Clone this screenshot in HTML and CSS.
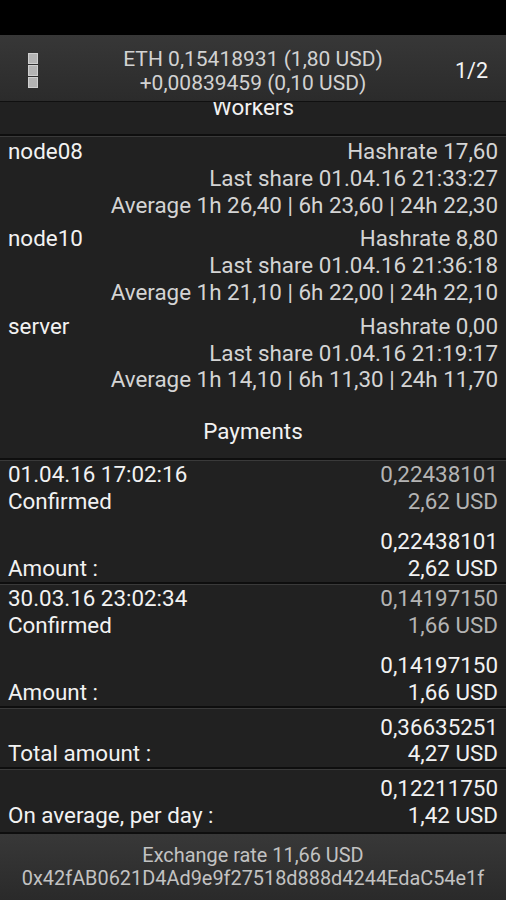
FILE: index.html
```html
<!DOCTYPE html>
<html lang="en">
<head>
<meta charset="utf-8" />
<title>Pool stats</title>
<link rel="stylesheet" href="styles.css">
</head>
<body>
<div class="screen">
  <div class="status-bar"></div>

  <div class="header">
    <div class="menu-icon">
      <span></span>
      <span></span>
      <span></span>
    </div>
    <div class="balance">
      <div>ETH 0,15418931 (1,80 USD)</div>
      <div>+0,00839459 (0,10 USD)</div>
    </div>
    <div class="page">1/2</div>
  </div>

  <div class="main">
    <div class="scroll">
      <div class="section-title">Workers</div>
      <div class="workers">
        <div class="worker">
          <div class="name">node08</div>
          <div class="stats">
            <div>Hashrate 17,60</div>
            <div>Last share 01.04.16 21:33:27</div>
            <div>Average 1h 26,40 | 6h 23,60 | 24h 22,30</div>
          </div>
        </div>
        <div class="worker">
          <div class="name">node10</div>
          <div class="stats">
            <div>Hashrate 8,80</div>
            <div>Last share 01.04.16 21:36:18</div>
            <div>Average 1h 21,10 | 6h 22,00 | 24h 22,10</div>
          </div>
        </div>
        <div class="worker">
          <div class="name">server</div>
          <div class="stats">
            <div>Hashrate 0,00</div>
            <div>Last share 01.04.16 21:19:17</div>
            <div>Average 1h 14,10 | 6h 11,30 | 24h 11,70</div>
          </div>
        </div>
      </div>

      <div class="section-title">Payments</div>

      <div class="payment">
        <div class="pair">
          <div>
            <div>01.04.16 17:02:16</div>
            <div>Confirmed</div>
          </div>
          <div class="value muted">
            <div>0,22438101</div>
            <div>2,62 USD</div>
          </div>
        </div>
        <div class="pair total">
          <div class="label">Amount :</div>
          <div class="value">
            <div>0,22438101</div>
            <div>2,62 USD</div>
          </div>
        </div>
      </div>

      <div class="payment">
        <div class="pair">
          <div>
            <div>30.03.16 23:02:34</div>
            <div>Confirmed</div>
          </div>
          <div class="value muted">
            <div>0,14197150</div>
            <div>1,66 USD</div>
          </div>
        </div>
        <div class="pair total">
          <div class="label">Amount :</div>
          <div class="value">
            <div>0,14197150</div>
            <div>1,66 USD</div>
          </div>
        </div>
      </div>

      <div class="summary sum-total">
        <div class="pair">
          <div class="label">Total amount :</div>
          <div class="value">
            <div>0,36635251</div>
            <div>4,27 USD</div>
          </div>
        </div>
      </div>

      <div class="summary sum-day">
        <div class="pair">
          <div class="label">On average, per day :</div>
          <div class="value">
            <div>0,12211750</div>
            <div>1,42 USD</div>
          </div>
        </div>
      </div>
    </div>
  </div>

  <div class="footer">
    <div>Exchange rate 11,66 USD</div>
    <div>0x42fAB0621D4Ad9e9f27518d888d4244EdaC54e1f</div>
  </div>
</div>
</body>
</html>
```

FILE: styles.css
```css
body {
  margin: 0;
  padding: 0;
  background-color: #000;
  font-family: Roboto, "Noto Sans", sans-serif;
  color: #f2f2f2;
}

.screen {
  display: flex;
  flex-direction: column;
  height: 900px;
  overflow: hidden;
}

.status-bar {
  height: 35px;
  background-color: #000;
}

.header {
  display: grid;
  grid-template-columns: 1fr auto 1fr;
  align-items: center;
  height: 61px;
  padding: 5px 18px 0;
  background: linear-gradient(#373737, #2b2b2b);
  border-bottom: 1px solid #101010;
}

.menu-icon {
  display: flex;
  flex-direction: column;
  gap: 1px;
  margin-left: 10px;
}

.menu-icon span {
  width: 8px;
  height: 9px;
  background-color: #b4b4b4;
  border: 1px solid #cfcfcf;
}

.balance {
  text-align: center;
  font-size: 21px;
  line-height: 24px;
  color: #d2d2d2;
}

.page {
  text-align: right;
  font-size: 21.5px;
  color: #f4f4f4;
}

.main {
  flex: 1;
  overflow: hidden;
  background-color: #212121;
}

.scroll {
  margin-top: -24px;
  font-size: 22.4px;
  line-height: 26.5px;
}

.section-title {
  height: 26px;
  padding: 16px 0 14px;
  text-align: center;
  line-height: 26px;
}

.workers,
.payment,
.summary {
  border-top: 2px solid #0e0e0e;
  box-shadow: inset 0 1px 0 #3a3a3a;
}

.workers {
  padding: 2px 8px 2px;
}

.worker {
  display: flex;
  justify-content: space-between;
  padding-bottom: 7px;
  line-height: 26.8px;
}

.stats {
  text-align: right;
  color: #d4d4d4;
}

.payment {
  padding: 1px 8px 1px;
}

.pair {
  display: flex;
  justify-content: space-between;
}

.pair.total {
  margin-top: 14px;
}

.label {
  align-self: flex-end;
}

.value {
  text-align: right;
}

.muted {
  color: #b4b4b4;
}

.sum-total {
  padding: 7px 8px 1px;
  line-height: 25.5px;
}

.sum-day {
  padding: 6px 8px 3px;
}

.footer {
  height: 56px;
  padding-top: 10px;
  border-top: 2px solid #0e0e0e;
  background: linear-gradient(#383838, #2a2a2a);
  text-align: center;
  font-size: 19.9px;
  line-height: 23px;
  color: #c2c2c2;
}
```
